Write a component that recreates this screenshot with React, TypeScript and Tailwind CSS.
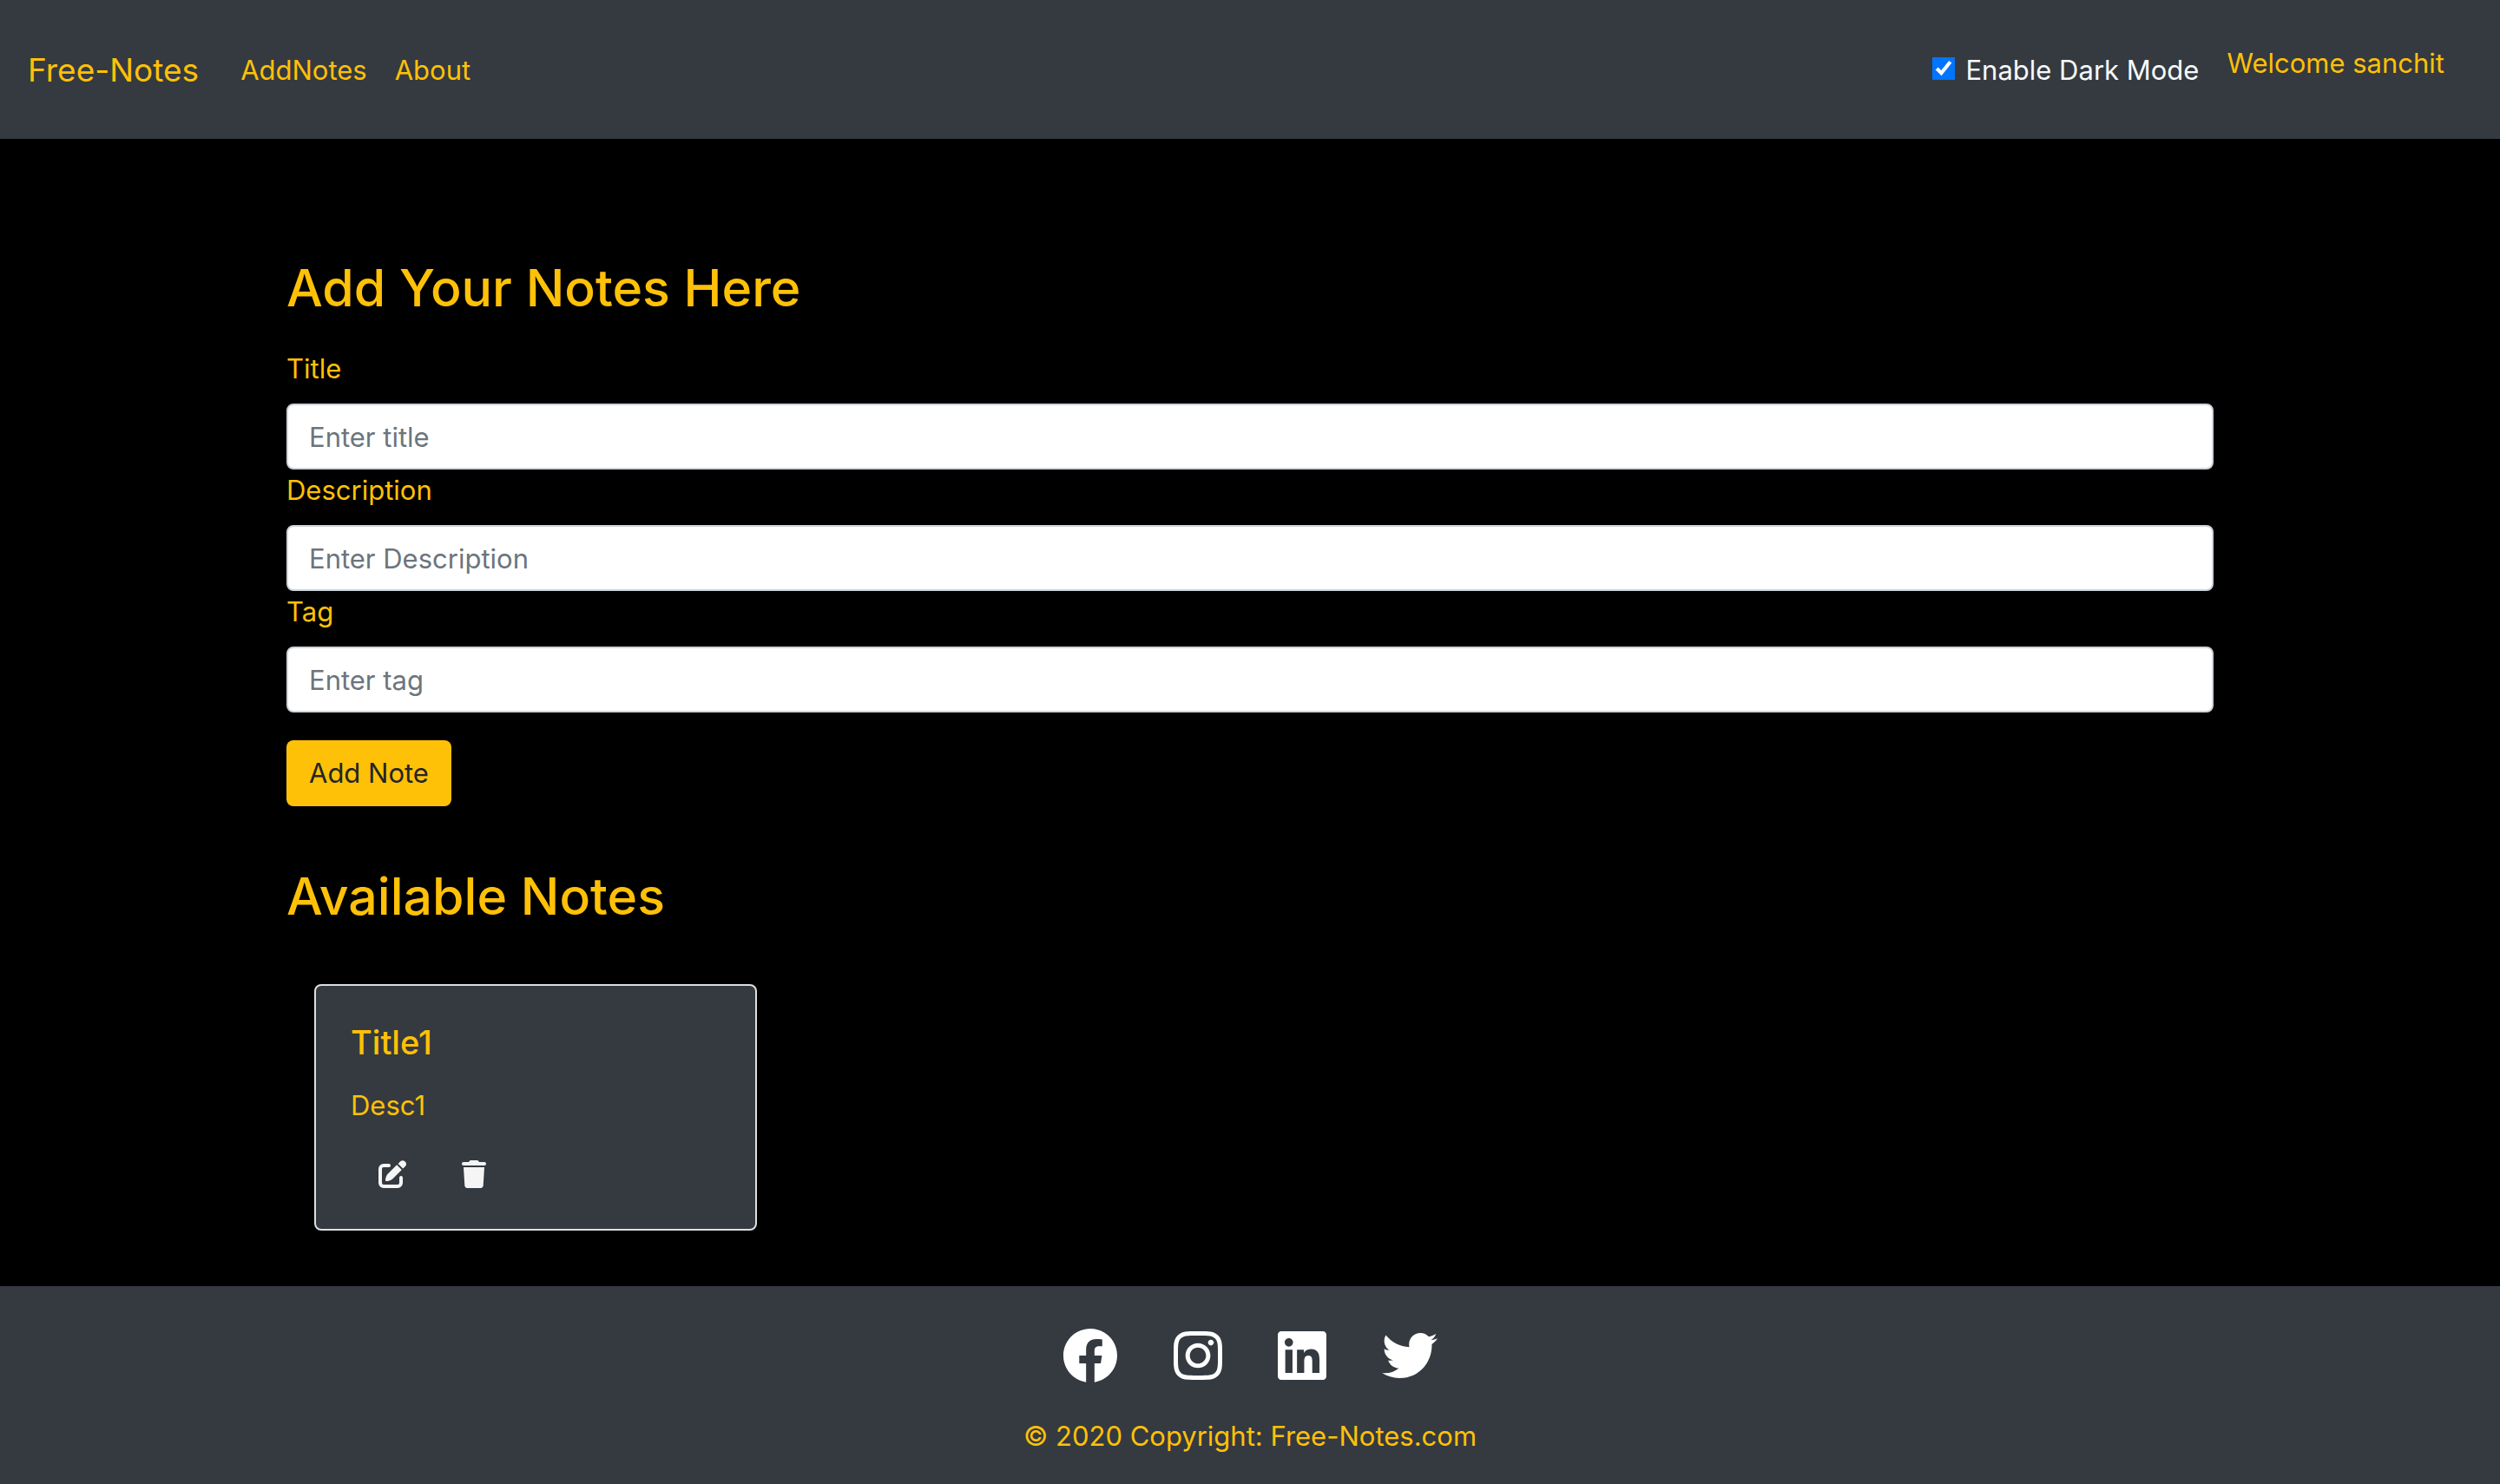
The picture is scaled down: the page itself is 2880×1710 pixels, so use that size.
import { FaFacebook, FaInstagram, FaLinkedin, FaTwitter } from "react-icons/fa";

const fields = [
  { id: "title", label: "Title", placeholder: "Enter title" },
  { id: "description", label: "Description", placeholder: "Enter Description" },
  { id: "tag", label: "Tag", placeholder: "Enter tag" },
];

const notes = [{ title: "Title1", description: "Desc1" }];

function EditIcon() {
  return (
    <svg viewBox="0 0 32 32" className="h-8 w-8" fill="currentColor" aria-hidden="true">
      <path
        d="M12 6H6a4 4 0 0 0-4 4v16a4 4 0 0 0 4 4h16a4 4 0 0 0 4-4v-6"
        fill="none"
        stroke="currentColor"
        strokeWidth="4"
        strokeLinecap="round"
      />
      <path d="M21.200 5.200 10.900 15.600C9.100 17.400 8 20.400 8 23.300c0 .5.300.8.800.8 2.900 0 5.900-1.100 7.700-2.900L26.800 10.900z" />
      <path d="M22.600 3.900 25.200 1.300a4.050 4.050 0 0 1 5.700 5.700L28.200 9.500z" />
    </svg>
  );
}

function TrashIcon() {
  return (
    <svg viewBox="0 0 448 512" className="h-8 w-7" fill="currentColor" aria-hidden="true">
      <path d="M53.200 467c1.560 24.840 23.020 45 47.900 45h245.800c24.880 0 46.330-20.160 47.900-45L416 128H32L53.200 467zM416 32H320l-11.580-16.720C303.100 6 293 0 282.400 0H165.600C155 0 144.900 6 139.600 15.280L128 32H32C14 32 0 46 0 64s14 32 32 32h384c18 0 32-14 32-32s-14-32-32-32z" />
    </svg>
  );
}

export default function App() {
  return (
    <div className="flex min-h-screen flex-col bg-black font-['Inter',sans-serif] text-[31px] leading-[48px] text-[#ffc107]">
      <nav className="flex h-40 items-center bg-[#343a40] px-8 pt-0.5">
        <a href="#" className="mr-12 text-[37px] leading-[60px]">Free-Notes</a>
        <div className="flex gap-8">
          <a href="#add">AddNotes</a>
          <a href="#about">About</a>
        </div>
        <label className="ml-auto flex items-center text-[#f8f9fa]">
          <input type="checkbox" defaultChecked className="mr-3 mb-1 h-[26px] w-[26px] accent-[#0075ff]" />
          Enable Dark Mode
        </label>
        <p className="mr-8 mb-4 ml-8">Welcome sanchit</p>
      </nav>

      <main className="mx-auto w-full max-w-[2280px] flex-1 px-[30px] pt-[134px]">
        <h2 className="mb-8 text-[59px] leading-[75px] font-medium">Add Your Notes Here</h2>
        <form id="add" onSubmit={(e) => e.preventDefault()}>
          {fields.map((f) => (
            <div key={f.id}>
              <label htmlFor={f.id} className="mb-4 block">{f.label}</label>
              <input
                id={f.id}
                type="text"
                placeholder={f.placeholder}
                className="block h-[76px] w-full rounded-lg border-2 border-[#ced4da] bg-white px-6 text-[#495057] placeholder:text-[#6c757d]"
              />
            </div>
          ))}
          <button type="submit" className="mt-8 block h-[76px] rounded-lg bg-[#ffc107] px-[26px] text-[#212529]">Add Note</button>
        </form>
        <h2 className="mt-[66px] mb-16 text-[59px] leading-[75px] font-medium">Available Notes</h2>
        <div className="grid grid-cols-4 px-8 pb-16">
          {notes.map((n) => (
            <article key={n.title} className="w-[510px] rounded-lg border-2 border-[#dfdfdf] bg-[#343a40] p-10">
              <h5 className="mb-6 text-[38px] leading-[50px] font-medium">{n.title}</h5>
              <p className="mb-6">{n.description}</p>
              <div className="flex h-[54px] items-center gap-16 pt-2 pl-8 text-[whitesmoke]">
                <button type="button" aria-label="Edit note"><EditIcon /></button>
                <button type="button" aria-label="Delete note"><TrashIcon /></button>
              </div>
            </article>
          ))}
        </div>
      </main>

      <footer className="flex flex-col items-center gap-[37px] bg-[#343a40] pt-12 pb-[31px]">
        <div className="flex gap-16 text-white">
          <a href="#facebook" aria-label="Facebook"><FaFacebook className="h-16 w-16" /></a>
          <a href="#instagram" aria-label="Instagram"><FaInstagram className="h-16 w-14" /></a>
          <a href="#linkedin" aria-label="LinkedIn"><FaLinkedin className="h-16 w-14" /></a>
          <a href="#twitter" aria-label="Twitter"><FaTwitter className="h-16 w-16" /></a>
        </div>
        <p>© 2020 Copyright: <a href="#home">Free-Notes.com</a></p>
      </footer>
    </div>
  );
}
